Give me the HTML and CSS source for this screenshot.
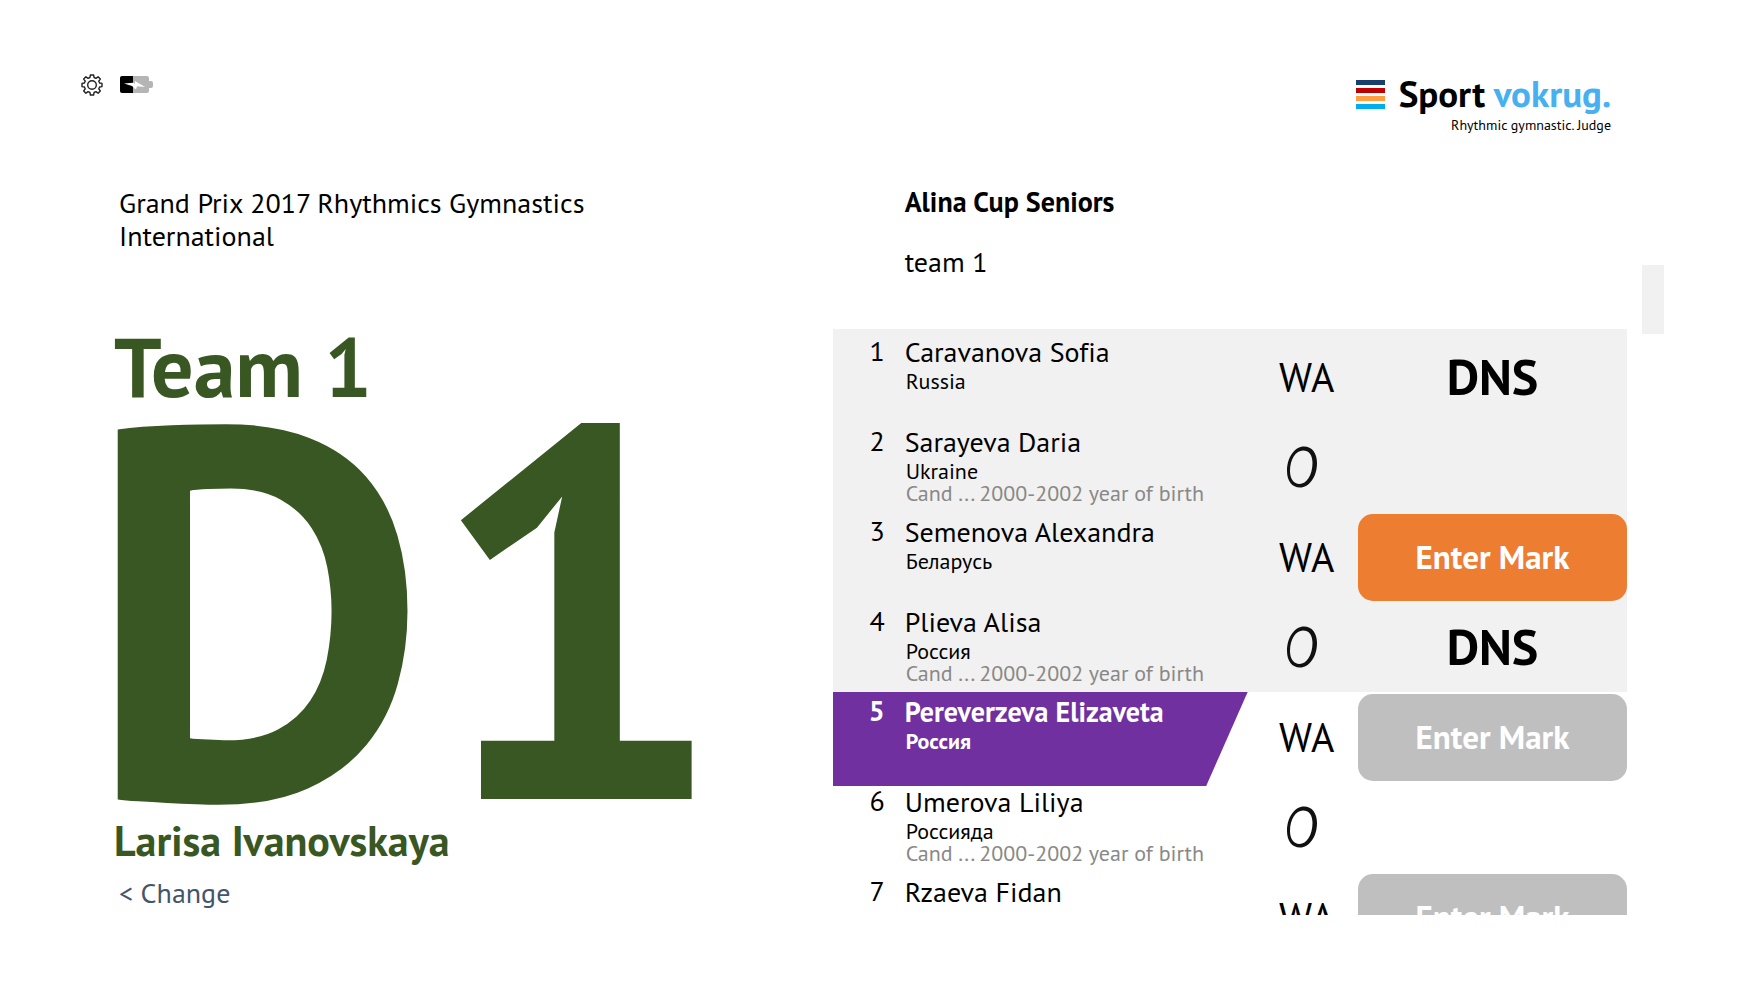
FILE: index.html
```
<!DOCTYPE html>
<html lang="en">

<head>
  <meta charset="utf-8">
  <meta content="width=device-width, initial-scale=1.0" name="viewport">
  <title>Sport vokrug. Rhythmic gymnastic. Judge</title>
  <link rel="stylesheet" href="styles.css">
</head>

<body>
  <header class="header">
    <div class="status">
      <button class="settings" type="button" aria-label="Settings">
        <svg width="22" height="22" viewBox="0 0 22 22" fill="none" stroke="#222" stroke-width="1.4" stroke-linejoin="round">
          <path d="M9.4 1h3.2l.5 2.5 1.8.8 2.2-1.5 2.2 2.2-1.5 2.2.8 1.8 2.4.4v3.2l-2.4.4-.8 1.8 1.5 2.2-2.2 2.2-2.2-1.5-1.8.8-.5 2.5H9.4l-.5-2.5-1.8-.8-2.2 1.5L2.7 17l1.5-2.2-.8-1.8-2.4-.4V9.4L3.4 9l.8-1.8L2.7 5l2.2-2.2 2.2 1.5 1.8-.8z" />
          <circle cx="11" cy="11" r="4.3" />
        </svg>
      </button>
      <svg class="battery" width="33" height="17" viewBox="0 0 33 17">
        <path d="M12 0h15a2 2 0 0 1 2 2v3h2a2 2 0 0 1 2 2v3a2 2 0 0 1-2 2h-2v3a2 2 0 0 1-2 2H12z" fill="#b5b5b5" />
        <path d="M2 0h11v17H2a2 2 0 0 1-2-2V2a2 2 0 0 1 2-2z" fill="#000" />
        <path d="M4 7.5l9-.8 2 1V5l10 6-8-.8-1 3.3-4-3.500z" fill="#fff" />
      </svg>
    </div>
    <div class="logo">
      <div class="logo-bars">
        <span class="bar navy"></span>
        <span class="bar red"></span>
        <span class="bar orange"></span>
        <span class="bar cyan"></span>
      </div>
      <div class="logo-text">
        <div class="logo-name">Sport <span>vokrug.</span></div>
        <div class="logo-tagline">Rhythmic gymnastic. Judge</div>
      </div>
    </div>
  </header>

  <main class="content">
    <section class="judge">
      <p class="event">Grand Prix 2017 Rhythmics Gymnastics International</p>
      <h1 class="team">Team 1</h1>
      <div class="code">D1</div>
      <h2 class="judge-name">Larisa Ivanovskaya</h2>
      <a class="change" href="#">&lt; Change</a>
    </section>

    <section class="start-list">
      <div class="cup">
        <h2>Alina Cup Seniors</h2>
        <p>team 1</p>
      </div>
      <div class="list">
        <table>
          <tbody class="done">
            <tr>
              <td class="num">1</td>
              <td class="athlete">
                <div class="name">Caravanova Sofia</div>
                <div class="country">Russia</div>
              </td>
              <td class="app">WA</td>
              <td class="mark">DNS</td>
            </tr>
            <tr>
              <td class="num">2</td>
              <td class="athlete">
                <div class="name">Sarayeva Daria</div>
                <div class="country">Ukraine</div>
                <div class="category">Cand ... 2000-2002 year of birth</div>
              </td>
              <td class="app"><svg class="hoop" viewBox="0 0 30 42"><use href="#hoop" /></svg></td>
              <td class="mark"></td>
            </tr>
            <tr>
              <td class="num">3</td>
              <td class="athlete">
                <div class="name">Semenova Alexandra</div>
                <div class="country">Беларусь</div>
              </td>
              <td class="app">WA</td>
              <td class="mark"><button class="enter active" type="button">Enter Mark</button></td>
            </tr>
            <tr>
              <td class="num">4</td>
              <td class="athlete">
                <div class="name">Plieva Alisa</div>
                <div class="country">Россия</div>
                <div class="category">Cand ... 2000-2002 year of birth</div>
              </td>
              <td class="app"><svg class="hoop" viewBox="0 0 30 42"><use href="#hoop" /></svg></td>
              <td class="mark">DNS</td>
            </tr>
          </tbody>
          <tbody>
            <tr class="current">
              <td class="num">5</td>
              <td class="athlete">
                <div class="name">Pereverzeva Elizaveta</div>
                <div class="country">Россия</div>
              </td>
              <td class="app">WA</td>
              <td class="mark"><button class="enter" type="button">Enter Mark</button></td>
            </tr>
            <tr>
              <td class="num">6</td>
              <td class="athlete">
                <div class="name">Umerova Liliya</div>
                <div class="country">Россияда</div>
                <div class="category">Cand ... 2000-2002 year of birth</div>
              </td>
              <td class="app"><svg class="hoop" viewBox="0 0 30 42"><use href="#hoop" /></svg></td>
              <td class="mark"></td>
            </tr>
            <tr>
              <td class="num">7</td>
              <td class="athlete">
                <div class="name">Rzaeva Fidan</div>
              </td>
              <td class="app">WA</td>
              <td class="mark"><button class="enter" type="button">Enter Mark</button></td>
            </tr>
          </tbody>
        </table>
      </div>
    </section>

    <div class="scroll">
      <div class="scroll-thumb"></div>
    </div>
  </main>

  <svg width="0" height="0" class="defs">
    <defs>
      <path id="hoop" fill="#111" fill-rule="evenodd" d="M17 .5C25 .5 30 7 30 17C30 31 22 41.500 13 41.500C5 41.500 0 35 0 25C0 11 8 .5 17 .5zM16 4.500C9 4.500 3 13 3 25C3 33 7 38 12.500 38C19.500 38 25.500 29 25.500 17C25.500 9 22 4.500 16 4.500z" />
    </defs>
  </svg>
</body>

</html>
```
FILE: styles.css
```
*,
*::before,
*::after {
  box-sizing: border-box;
}

body {
  display: flex;
  flex-direction: column;
  height: 100vh;
  margin: 0;
  padding: 74px 93px 70px 81px;
  background-color: #fff;
  color: #000;
  font-family: "PT Sans", Lato, "Noto Sans", sans-serif;
  font-size: 28px;
  font-variant-ligatures: none;
  line-height: 33px;
}

h1,
h2,
p {
  margin: 0;
  font-size: 28px;
}

button {
  border: 0;
  padding: 0;
  font: inherit;
  cursor: pointer;
}

.defs {
  position: absolute;
}

/* header */

.header {
  display: flex;
  justify-content: space-between;
  height: 111px;
  padding-right: 53px;
}

.status {
  display: flex;
  align-items: flex-start;
  gap: 17px;
}

.settings {
  display: flex;
  width: 22px;
  background: none;
}

.battery {
  margin-top: 2px;
}

.logo {
  display: flex;
  align-items: flex-start;
  gap: 14px;
}

.logo-bars {
  display: grid;
  gap: 3px;
  width: 29px;
  padding-top: 6px;
}

.bar {
  height: 5px;
}

.navy {
  background-color: #17406d;
}

.red {
  background-color: #c00000;
}

.orange {
  background-color: #ff9f3f;
}

.cyan {
  background-color: #00aeef;
}

.logo-name {
  font-size: 37px;
  font-weight: bold;
  line-height: 38px;
}

.logo-name span {
  color: #47b0f0;
}

.logo-tagline {
  padding-top: 2px;
  font-size: 14px;
  line-height: 22px;
  text-align: right;
}

/* columns */

.content {
  display: grid;
  flex: 1;
  grid-template-columns: 19fr 21fr 37px;
  min-height: 0;
  padding-left: 33px;
}

.judge {
  color: #385723;
}

.event {
  max-width: 500px;
  height: 135px;
  padding: 1px 0 0 5px;
  color: #000;
}

.team {
  font-size: 84px;
  line-height: 92px;
}

.code {
  height: 400px;
  margin-left: -28px;
  font-size: 528px;
  font-weight: bold;
  line-height: 382px;
}

.judge-name {
  font-size: 42px;
  line-height: 58px;
}

.change {
  display: inline-block;
  padding: 6px 0 0 5px;
  color: #44546a;
  text-decoration: none;
}

/* start list */

.start-list {
  display: flex;
  flex-direction: column;
  min-height: 0;
}

.cup {
  height: 144px;
  padding-left: 72px;
}

.cup p {
  padding-top: 27px;
}

.list {
  flex: 1;
  min-height: 0;
  overflow: hidden;
}

table,
tbody {
  display: block;
}

.done {
  padding-top: 3px;
  background-color: #f1f1f1;
}

tr {
  display: grid;
  position: relative;
  grid-template-columns: 72px 1fr 110px 269px;
  height: 90px;
}

td {
  padding: 0;
}

.num {
  padding: 2px 20px 0 0;
  text-align: right;
}

.athlete {
  padding-top: 3px;
}

.country,
.category {
  padding-left: 1px;
  font-size: 22px;
  line-height: 22px;
}

.country {
  padding-top: 2px;
}

.category {
  color: #888;
}

.app {
  align-self: center;
  padding-left: 31px;
  font-size: 40px;
  line-height: 44px;
}

.hoop {
  display: block;
  width: 30px;
  height: 42px;
  margin-left: 8px;
}

.mark {
  align-self: center;
  font-size: 50px;
  font-weight: bold;
  line-height: 60px;
  text-align: center;
}

.enter {
  display: block;
  width: 100%;
  height: 87px;
  border-radius: 15px;
  background-color: #bfbfbf;
  color: #fff;
  font-size: 33px;
  line-height: 40px;
}

.enter.active {
  background-color: #ed7d31;
}

.current::before {
  content: "";
  position: absolute;
  top: 0;
  left: 0;
  z-index: -1;
  width: 415px;
  height: 94px;
  background-color: #7030a0;
  clip-path: polygon(0 0, 100% 0, 90% 100%, 0 100%);
}

.current .num,
.current .athlete {
  color: #fff;
  font-weight: bold;
}

.scroll {
  padding: 80px 0 0 15px;
}

.scroll-thumb {
  height: 69px;
  background-color: #f1f1f1;
}
```
